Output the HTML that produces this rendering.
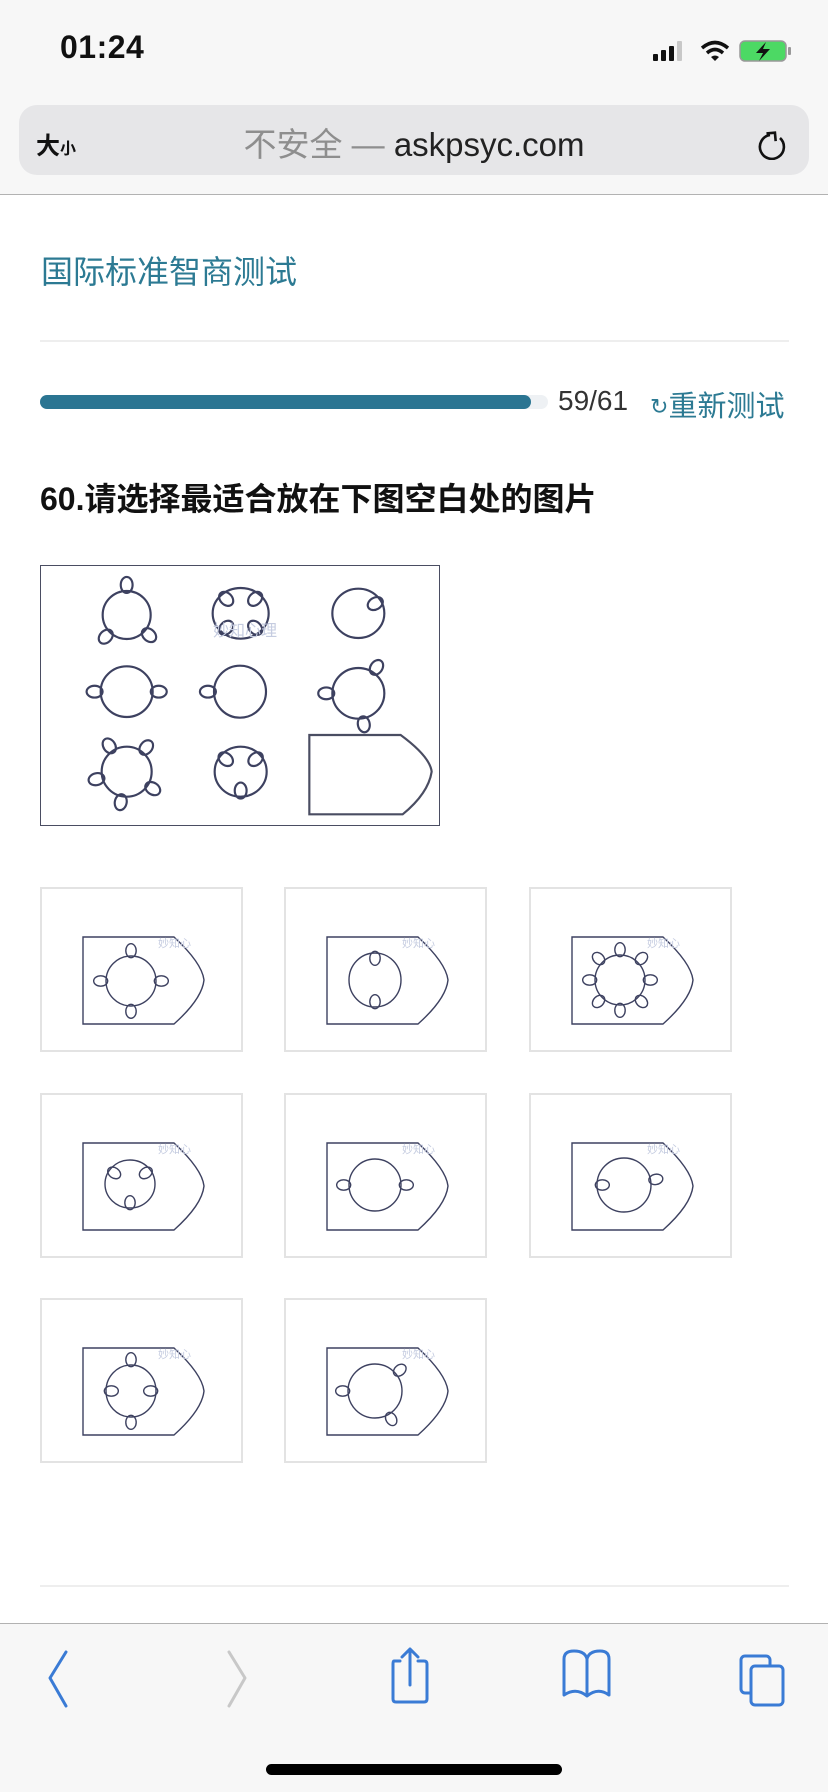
<!DOCTYPE html>
<html><head><meta charset="utf-8">
<style>
*{margin:0;padding:0;box-sizing:border-box}
body{width:828px;height:1792px;position:relative;background:#fff;font-family:"Liberation Sans","Noto Sans CJK SC",sans-serif;overflow:hidden}
.abs{position:absolute}
.hdr{left:0;top:0;width:828px;height:195px;background:#f7f7f7;border-bottom:1px solid #b2b2b2}
.url{left:19px;top:105px;width:790px;height:70px;background:#e6e6e8;border-radius:18px}
.opt{position:absolute;width:203px;height:165px;border:2px solid #e3e3e3;background:#fff}
.opt svg{position:absolute;left:-2px;top:-2px}
.bot{left:0;top:1623px;width:828px;height:169px;background:#f7f7f7;border-top:1px solid #b2b2b2}
</style></head><body>
<div class="abs hdr"></div>
<div class="abs" style="left:60px;top:29px;font-size:32px;font-weight:bold;color:#111;letter-spacing:0.5px">01:24</div>
<svg class="abs" style="left:650px;top:38px" width="145" height="26" viewBox="0 0 145 26">
<rect x="3" y="16" width="5" height="7" rx="1" fill="#111"/><rect x="11" y="12" width="5" height="11" rx="1" fill="#111"/><rect x="19" y="8" width="5" height="15" rx="1" fill="#111"/><rect x="27" y="3" width="5" height="20" rx="1" fill="#c8c8c8"/>
<path d="M52 10 Q65 -1 78 10" stroke="#111" stroke-width="3.5" fill="none"/><path d="M57 15 Q65 8 73 15" stroke="#111" stroke-width="3.5" fill="none"/><path d="M61 19 L65 23 L69 19 Q65 16 61 19Z" fill="#111"/>
<rect x="90" y="3" width="46" height="20" rx="5" fill="#4cd964" stroke="#999" stroke-width="1.5"/><rect x="138" y="9" width="3" height="8" rx="1" fill="#999"/>
<path d="M116 4 L106 15 L113 15 L109 23 L120 11 L113 11 Z" fill="#111"/>
</svg>
<div class="abs url"></div>
<div class="abs" style="left:36px;top:126px;font-size:24px;font-weight:bold;color:#111">大<span style="font-size:16px">小</span></div>
<div class="abs" style="left:0;width:828px;top:118px;text-align:center;font-size:33px;color:#222"><span style="color:#8e8e8e">不安全 — </span>askpsyc.com</div>
<svg class="abs" style="left:758px;top:122px" width="32" height="38" viewBox="0 0 32 38"><path d="M12 9 A12 12 0 1 0 22 12" stroke="#111" stroke-width="2.6" fill="none" transform="translate(0,4)"/><path d="M12 7 L18 13 L12 19" stroke="#111" stroke-width="2.6" fill="none" transform="rotate(-50 15 13)"/></svg>

<div class="abs" style="left:41px;top:247px;font-size:32px;color:#2c7a93">国际标准智商测试</div>
<div class="abs" style="left:40px;top:340px;width:749px;height:2px;background:#eee"></div>
<div class="abs" style="left:40px;top:395px;width:508px;height:14px;border-radius:7px;background:#eef1f4"></div>
<div class="abs" style="left:40px;top:395px;width:491px;height:14px;border-radius:7px;background:#2b7592"></div>
<div class="abs" style="left:558px;top:385px;font-size:28px;color:#333">59/61</div>
<div class="abs" style="left:650px;top:383px;font-size:29px;color:#2c7a93"><span style="font-size:22px;position:relative;top:-2px">↻</span>重新测试</div>
<div class="abs" style="left:40px;top:474px;font-size:32px;font-weight:bold;color:#111">60.请选择最适合放在下图空白处的图片</div>

<div class="abs" style="left:40px;top:565px;width:400px;height:261px;border:1.5px solid #4a4d62;background:#fff"></div>
<svg id="main" class="abs" style="left:30px;top:550px" width="420" height="290" viewBox="0 0 1260 870"></svg>
<div class="abs" style="left:213px;top:617px;font-size:16px;color:#c5cce0">妙知心理</div>

<div class="opt" style="left:40px;top:887px"><svg id="o1" width="203" height="165"></svg></div>
<div class="opt" style="left:284px;top:887px"><svg id="o2" width="203" height="165"></svg></div>
<div class="opt" style="left:529px;top:887px"><svg id="o3" width="203" height="165"></svg></div>
<div class="opt" style="left:40px;top:1093px"><svg id="o4" width="203" height="165"></svg></div>
<div class="opt" style="left:284px;top:1093px"><svg id="o5" width="203" height="165"></svg></div>
<div class="opt" style="left:529px;top:1093px"><svg id="o6" width="203" height="165"></svg></div>
<div class="opt" style="left:40px;top:1298px"><svg id="o7" width="203" height="165"></svg></div>
<div class="opt" style="left:284px;top:1298px"><svg id="o8" width="203" height="165"></svg></div>

<div class="abs" style="left:40px;top:1585px;width:749px;height:2px;background:#eee"></div>
<div class="abs bot"></div>
<svg class="abs" style="left:0;top:1640px" width="828" height="80" viewBox="0 0 828 80">
<g stroke="#3a7bd5" stroke-width="3" fill="none" stroke-linecap="round" stroke-linejoin="round">
<path d="M66 23 L50 49 L66 77" transform="translate(0,-11)"/>
<path d="M229 23 L245 49 L229 77" stroke="#c8c8c8" transform="translate(0,-11)"/>
<path d="M400 21 L394 21 Q393 21 393 24 L393 59 Q393 62 396 62 L424 62 Q427 62 427 59 L427 24 Q427 21 424 21 L418 21"/>
<path d="M410 9 L410 45 M402 17 L410 9 L418 17"/>
<path d="M564 55 L564 19 Q564 11 574 11 Q585 11 587 19 Q589 11 600 11 Q609 11 609 19 L609 55 Q598 47 587 56 Q576 47 564 55 Z M587 19 L587 56"/>
<rect x="741" y="16" width="29" height="37" rx="4"/>
<rect x="751" y="26" width="32" height="39" rx="4" fill="#f7f7f7"/>
</g></svg>
<div class="abs" style="left:266px;top:1764px;width:296px;height:11px;border-radius:6px;background:#000"></div>

<script>
var NS="http://www.w3.org/2000/svg";
function el(svg,tag,attrs){var e=document.createElementNS(NS,tag);for(var k in attrs)e.setAttribute(k,attrs[k]);svg.appendChild(e);return e;}
function fig(svg,cx,cy,rx,ry,L,sw,loops){
  el(svg,"ellipse",{cx:cx,cy:cy,rx:rx,ry:ry,fill:"none",stroke:"#3d4160","stroke-width":sw});
  loops.forEach(function(l){
    var a=l[0]*Math.PI/180,inw=l[1];
    var er=(rx*ry)/Math.sqrt(Math.pow(ry*Math.cos(a),2)+Math.pow(rx*Math.sin(a),2));
    var d=inw? er-L/2+L*0.12 : er+L/2-L*0.12;
    var x=cx+d*Math.cos(a),y=cy+d*Math.sin(a);
    el(svg,"ellipse",{cx:x,cy:y,rx:L/2,ry:L/2.7,fill:"none",stroke:"#3d4160","stroke-width":sw,transform:"rotate("+l[0]+" "+x+" "+y+")"});
  });
}
var m=document.getElementById("main");
var S=6.5,L=48;
fig(m,290,195,72,72,L,S,[[-90],[134],[42]]);
fig(m,632,190,84,76,L,S,[[-135,1],[-45,1],[135,1],[45,1]]);
fig(m,985,190,78,74,L,S,[[-30,1]]);
fig(m,290,425,78,76,L,S,[[180],[0]]);
fig(m,630,425,78,78,L,S,[[180]]);
fig(m,985,430,78,76,L,S,[[180],[-55],[80]]);
fig(m,290,665,75,75,L,S,[[-124],[-51],[166],[33],[101]]);
fig(m,632,665,78,75,L,S,[[-140,1],[-40,1],[90,1]]);
el(m,"path",{d:"M838,555 L1112,555 Q1200,620 1205,665 Q1195,730 1118,793 L838,793 Z",fill:"none",stroke:"#4a4d62","stroke-width":S});
var defs=[
 [91,94,25,25,[[0],[90],[180],[270]]],
 [91,93,26,27,[[-90,1],[90,1]]],
 [91,93,25,25,[[0],[45],[90],[135],[180],[225],[270],[315]]],
 [90,91,25,24,[[-145,1],[-35,1],[90,1]]],
 [91,92,26,26,[[180],[0]]],
 [95,92,27,27,[[180,1],[-10]]],
 [91,93,25,26,[[-90],[90],[180,1],[0,1]]],
 [91,93,27,27,[[180],[-40],[60]]]
];
for(var i=0;i<8;i++){
  var s=document.getElementById("o"+(i+1)),d=defs[i];
  el(s,"path",{d:"M43,50 L134,50 Q162,76 164,93 Q162,112 134,137 L43,137 Z",fill:"none",stroke:"#3d4160","stroke-width":1.4});
  var t=el(s,"text",{x:118,y:60,"font-size":11,fill:"#c5cce0","font-family":"Noto Sans CJK SC, sans-serif"});t.textContent="妙知心";
  fig(s,d[0],d[1],d[2],d[3],14,1.4,d[4]);
}
</script>
</body></html>
